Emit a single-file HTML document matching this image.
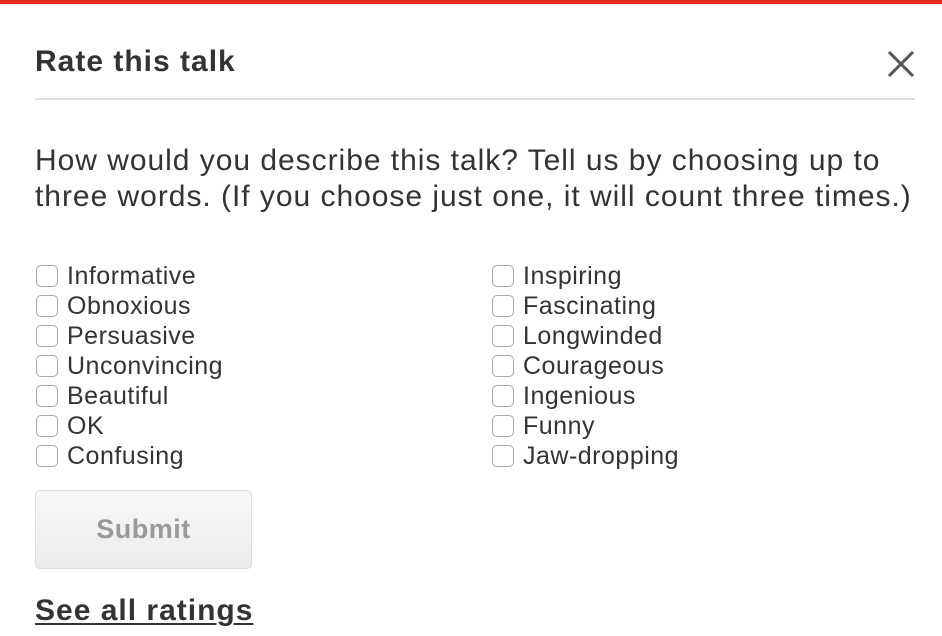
<!DOCTYPE html>
<html><head><style>
body{margin:0;width:942px;height:636px;background:#fff;font-family:"Liberation Sans",Arial,sans-serif;color:#333;position:relative;overflow:hidden}
.bar{position:absolute;left:0;top:0;width:942px;height:4px;background:#e62b1e}
h1{position:absolute;left:35px;top:45px;margin:0;font-size:30px;letter-spacing:1px;font-weight:bold;color:#333}
.hr{position:absolute;left:35px;top:98px;width:880px;height:2px;background:#ddd}
.x{position:absolute;left:886px;top:49px}
p{position:absolute;left:35px;top:143px;margin:0;font-size:30px;letter-spacing:0.97px;line-height:36px;color:#333;width:905px}
.col{position:absolute;top:261px}
.row{height:30px;display:flex;align-items:center;font-size:25px;letter-spacing:0.5px;color:#333}
.cb{width:22px;height:22px;border:1px solid #aaa;border-radius:5px;margin-right:9px;box-sizing:border-box;background:#fff}
.btn{position:absolute;left:35px;top:490px;width:217px;height:79px;box-sizing:border-box;border:1.5px solid #ddd;border-radius:5px;background:linear-gradient(#f8f8f8,#ececec);text-align:center;line-height:77px;font-size:27px;letter-spacing:0.5px;font-weight:bold;color:#999}
.see{position:absolute;left:35px;top:594px;font-size:30px;letter-spacing:1px;font-weight:bold;color:#333;text-decoration:underline;text-decoration-thickness:2px;text-underline-offset:3px}
</style></head><body>
<div class="bar"></div>
<h1>Rate this talk</h1>
<svg class="x" width="30" height="30" viewBox="0 0 30 30"><path d="M3 3L27 27M27 3L3 27" stroke="#555" stroke-width="3"/></svg>
<div class="hr"></div>
<p>How would you describe this talk? Tell us by choosing up to<br>three words. (If you choose just one, it will count three times.)</p>
<div class="col" style="left:36px">
<div class="row"><span class="cb"></span>Informative</div>
<div class="row"><span class="cb"></span>Obnoxious</div>
<div class="row"><span class="cb"></span>Persuasive</div>
<div class="row"><span class="cb"></span>Unconvincing</div>
<div class="row"><span class="cb"></span>Beautiful</div>
<div class="row"><span class="cb"></span>OK</div>
<div class="row"><span class="cb"></span>Confusing</div>
</div>
<div class="col" style="left:492px">
<div class="row"><span class="cb"></span>Inspiring</div>
<div class="row"><span class="cb"></span>Fascinating</div>
<div class="row"><span class="cb"></span>Longwinded</div>
<div class="row"><span class="cb"></span>Courageous</div>
<div class="row"><span class="cb"></span>Ingenious</div>
<div class="row"><span class="cb"></span>Funny</div>
<div class="row"><span class="cb"></span>Jaw-dropping</div>
</div>
<div class="btn">Submit</div>
<div class="see">See all ratings</div>
</body></html>
